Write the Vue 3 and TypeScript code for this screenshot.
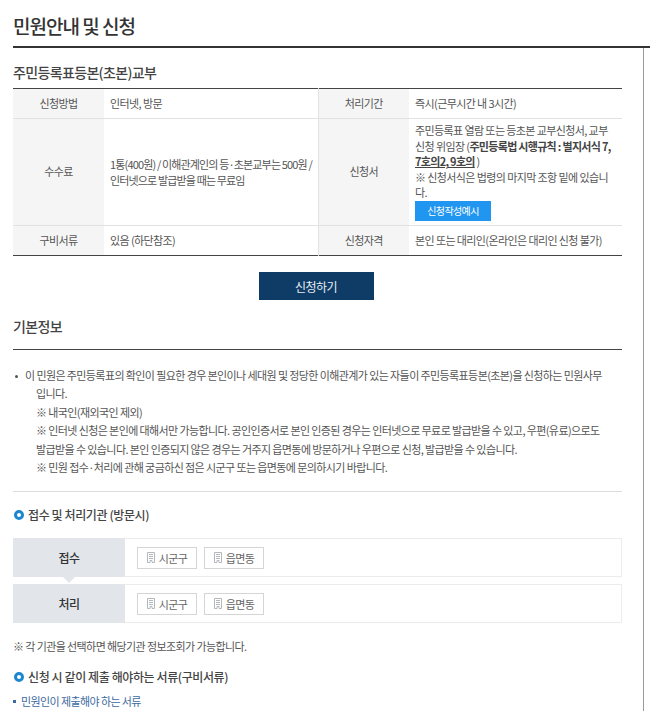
<template>
  <div class="page">
    <header class="page-head">
      <h1>민원안내 및 신청</h1>
    </header>
    <div class="frame">
      <main class="content">
        <h2 class="svc-title">주민등록표등본(초본)교부</h2>
        <table class="info">
          <colgroup>
            <col style="width: 91px" />
            <col style="width: 214px" />
            <col style="width: 91px" />
            <col />
          </colgroup>
          <tbody>
            <tr class="r1">
              <th>신청방법</th>
              <td>인터넷, 방문</td>
              <th class="side">처리기간</th>
              <td>즉시(근무시간 내 3시간)</td>
            </tr>
            <tr class="r2">
              <th>수수료</th>
              <td class="fee">1통(400원) / 이해관계인의 등·초본교부는 500원 / 인터넷으로 발급받을 때는 무료임</td>
              <th class="side">신청서</th>
              <td>
                주민등록표 열람 또는 등초본 교부신청서, 교부신청 위임장 (<b>주민등록법 시행규칙 : 별지서식 7,<br /><u>7호의2, 9호의</u></b> )<br />
                ※ 신청서식은 법령의 마지막 조항 밑에 있습니다.
                <a class="sample">신청작성예시</a>
              </td>
            </tr>
            <tr class="r3">
              <th>구비서류</th>
              <td>있음 (하단참조)</td>
              <th class="side">신청자격</th>
              <td>본인 또는 대리인(온라인은 대리인 신청 불가)</td>
            </tr>
          </tbody>
        </table>

        <div class="apply-wrap">
          <button class="apply">신청하기</button>
        </div>

        <h2 class="basic-title">기본정보</h2>

        <ul class="desc">
          <li>
            <div class="lead">이 민원은 주민등록표의 확인이 필요한 경우 본인이나 세대원 및 정당한 이해관계가 있는 자들이 주민등록표등본(초본)을 신청하는 민원사무입니다.</div>
            <p>※ 내국인(재외국인 제외)</p>
            <p>※ 인터넷 신청은 본인에 대해서만 가능합니다. 공인인증서로 본인 인증된 경우는 인터넷으로 무료로 발급받을 수 있고, 우편(유료)으로도 발급받을 수 있습니다. 본인 인증되지 않은 경우는 거주지 읍면동에 방문하거나 우편으로 신청, 발급받을 수 있습니다.</p>
            <p>※ 민원 접수·처리에 관해 궁금하신 점은 시군구 또는 읍면동에 문의하시기 바랍니다.</p>
          </li>
        </ul>

        <h3 class="dot-title first">접수 및 처리기관 (방문시)</h3>

        <div class="flow">
          <div v-for="row in flowRows" :key="row" class="flow-row">
            <div class="flow-label">{{ row }}</div>
            <div class="flow-body">
              <a v-for="org in orgs" :key="org" class="org">
                <svg width="8" height="11" viewBox="0 0 8 11" fill="none" stroke="#b4b8bd" stroke-width="1">
                  <path d="M.5 10.5V.5h7v10H5V8.5H3v2z" />
                  <path d="M2 2.5h4M2 4.5h4M2 6.5h4" />
                </svg>
                {{ org }}
              </a>
            </div>
          </div>
        </div>

        <p class="note">※ 각 기관을 선택하면 해당기관 정보조회가 가능합니다.</p>

        <h3 class="dot-title second">신청 시 같이 제출 해야하는 서류(구비서류)</h3>
        <p class="doc-link">민원인이 제출해야 하는 서류</p>
      </main>
    </div>
  </div>
</template>

<script setup lang="ts">
const flowRows: string[] = ['접수', '처리'];
const orgs: string[] = ['시군구', '읍면동'];
</script>

<style>
html,
body {
  margin: 0;
  overflow: hidden;
  background: #fff;
}
</style>

<style scoped>
.page {
  width: 650px;
  height: 711px;
  overflow: hidden;
  font-family: "Noto Sans CJK KR", "Noto Sans", sans-serif;
  font-size: 11px;
  color: #555;
  letter-spacing: -0.6px;
}

.page-head {
  height: 46px;
  margin-left: 13px;
  border-bottom: 2px solid #333;
}

.page-head h1 {
  margin: 0;
  padding-top: 12px;
  font-size: 19px;
  line-height: 27px;
  font-weight: 500;
  color: #333;
  letter-spacing: -1px;
}

.frame {
  width: 644px;
  height: 663px;
  border-right: 1px solid #999;
  box-sizing: border-box;
}

.content {
  width: 609px;
  margin-left: 13px;
}

.svc-title {
  margin: 0;
  padding-top: 14px;
  height: 26px;
  font-size: 14px;
  line-height: 20px;
  font-weight: 500;
  color: #444;
  letter-spacing: -0.65px;
}

.info {
  width: 100%;
  table-layout: fixed;
  border-collapse: collapse;
  border-top: 1px solid #444;
  border-bottom: 1px solid #444;
  line-height: 15.4px;
}

.info th,
.info td {
  padding: 0 6px;
  border-bottom: 1px solid #e2e2e2;
  font-weight: 400;
  vertical-align: middle;
}

.info tr:last-child th,
.info tr:last-child td {
  border-bottom: 0;
}

.info th {
  background: #f5f5f5;
  text-align: center;
}

.info th.side {
  border-left: 1px solid #e2e2e2;
}

.info td.fee {
  letter-spacing: -0.85px;
  padding-right: 3px;
  line-height: 16px;
}

.r1 {
  height: 30px;
}

.r2 {
  height: 107px;
}

.r3 {
  height: 30px;
}

.info b {
  font-weight: 700;
  color: #444;
  letter-spacing: -0.7px;
}

.sample {
  display: block;
  width: 76px;
  height: 20px;
  background: #2196f0;
  color: #fff;
  font-size: 10px;
  line-height: 20px;
  text-align: center;
}

.apply-wrap {
  display: flex;
  justify-content: center;
  padding-top: 16px;
  padding-right: 3px;
}

.apply {
  width: 115px;
  height: 28px;
  padding: 0;
  border: 0;
  background: #0f3c66;
  color: #e8eef4;
  font: inherit;
  font-size: 12px;
  letter-spacing: -0.5px;
}

.basic-title {
  margin: 16px 0 0;
  height: 33px;
  border-bottom: 1px solid #444;
  font-size: 14px;
  line-height: 20px;
  font-weight: 500;
  color: #444;
  letter-spacing: -0.6px;
}

.desc {
  margin: 0;
  padding: 16px 14px 15px 23px;
  list-style: none;
  border-bottom: 1px solid #ddd;
  line-height: 18.4px;
}

.desc li {
  position: relative;
}

.desc li::before {
  content: "";
  position: absolute;
  left: -21px;
  top: 9px;
  width: 3px;
  height: 3px;
  border-radius: 50%;
  background: #555;
}

.desc .lead {
  text-indent: -11px;
}

.desc p {
  margin: 0;
}

.dot-title {
  display: flex;
  align-items: center;
  gap: 4px;
  margin: 0;
  padding-left: 1px;
  font-size: 12px;
  line-height: 18px;
  font-weight: 500;
  color: #444;
  letter-spacing: -0.4px;
}

.dot-title::before {
  content: "";
  width: 4px;
  height: 4px;
  border: 3px solid #1c87cf;
  border-radius: 50%;
}

.dot-title.first {
  margin-top: 14px;
}

.dot-title.second {
  margin-top: 13px;
}

.flow {
  display: flex;
  flex-direction: column;
  gap: 7px;
  margin-top: 14px;
}

.flow-row {
  display: flex;
  height: 37px;
  border: 1px solid #ececec;
  border-left: 0;
}

.flow-label {
  position: relative;
  display: flex;
  align-items: center;
  justify-content: center;
  width: 112px;
  margin: -1px 0;
  background: #e2e5ea;
  color: #333;
  font-size: 12px;
  font-weight: 500;
}

.flow-row:first-child .flow-label::after {
  content: "";
  position: absolute;
  left: 50%;
  bottom: -6px;
  margin-left: -6px;
  border-left: 6px solid transparent;
  border-right: 6px solid transparent;
  border-top: 6px solid #e2e5ea;
}

.flow-body {
  display: flex;
  align-items: center;
  gap: 7px;
  padding-left: 12px;
}

.org {
  display: flex;
  align-items: center;
  justify-content: center;
  gap: 4px;
  width: 58px;
  height: 20px;
  border: 1px solid #d5d5d5;
  font-size: 11px;
  color: #666;
}

.note {
  margin: 14px 0 0;
  line-height: 18px;
}

.doc-link {
  position: relative;
  margin: 6px 0 0;
  padding-left: 8px;
  line-height: 18px;
  color: #3d6a9e;
}

.doc-link::before {
  content: "";
  position: absolute;
  left: 0;
  top: 8px;
  width: 3px;
  height: 3px;
  background: #3d6a9e;
}
</style>
